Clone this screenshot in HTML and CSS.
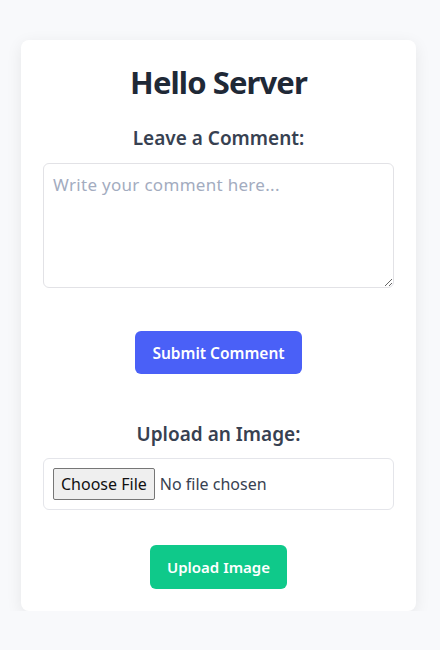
FILE: index.html
```html
<!DOCTYPE html>
<html>
<head>
<meta charset="utf-8">
<link rel="stylesheet" href="styles.css">
</head>
<body>
<div class="card">
  <h1 class="title">Hello Server</h1>
  <section class="block">
    <h2 class="label">Leave a Comment:</h2>
    <textarea class="comment" placeholder="Write your comment here..."></textarea>
    <button class="btn btn-blue">Submit Comment</button>
  </section>
  <section class="block block-upload">
    <h2 class="label">Upload an Image:</h2>
    <div class="filebox"><input type="file" class="file"></div>
    <button class="btn btn-green">Upload Image</button>
  </section>
</div>
</body>
</html>
```
FILE: styles.css
```css
* { box-sizing: border-box; }
body {
  margin: 0;
  background: #f8f9fb;
  font-family: "Noto Sans", "Open Sans", sans-serif;
  padding-top: 40px;
}
.card {
  width: 395px;
  margin: 0 0 0 21px;
  background: #fff;
  border-radius: 8px;
  box-shadow: 0 4px 16px rgba(0,0,0,0.08);
  padding: 22px 22px 22px;
  display: flex;
  flex-direction: column;
  align-items: center;
}
.title {
  margin: 0;
  font-size: 31px;
  line-height: 40px;
  font-weight: 700;
  color: #1f2937;
  letter-spacing: -0.9px;
}
.block {
  width: 100%;
  display: flex;
  flex-direction: column;
  align-items: center;
}
.label {
  margin: 22px 0 0;
  font-size: 19px;
  line-height: 28px;
  font-weight: 600;
  color: #374151;
}
.comment {
  margin-top: 11px;
  width: 100%;
  height: 125px;
  border: 1px solid #e2e2e6;
  border-radius: 6px;
  padding: 9px 9px;
  font-family: inherit;
  font-size: 17px;
  letter-spacing: 0.3px;
  color: #374151;
  resize: vertical;
}
.comment::placeholder { color: #a3acbf; }
.btn {
  border: none;
  border-radius: 6px;
  color: #fff;
  font-family: inherit;
  font-size: 15.5px;
  font-weight: 600;
  height: 43px;
  padding: 0 17px;
}
.btn-blue {
  margin-top: 43px;
  background: #4a60f7;
}
.block-upload .label { margin-top: 46px; }
.filebox {
  margin-top: 10px;
  width: 100%;
  height: 52px;
  border: 1px solid #e4e5ea;
  border-radius: 6px;
  padding: 0 9px;
  display: flex;
  align-items: center;
}
.file {
  font-family: inherit;
  font-size: 16px;
  color: #374151;
}
.file::file-selector-button {
  font-family: inherit;
  font-size: 16px;
  color: #111;
  background: #efefef;
  border: 1px solid #767676;
  border-radius: 2px;
  padding: 4px 7px;
  margin-right: 5px;
}
.btn-green {
  margin-top: 35px;
  background: #0fc98a;
  height: 44px;
  font-size: 15px;
}
```
